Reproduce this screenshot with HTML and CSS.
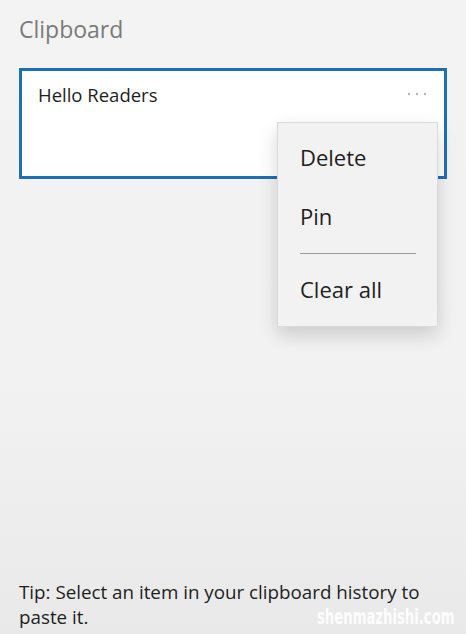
FILE: index.html
```html
<!DOCTYPE html>
<html>
<head>
<meta charset="utf-8">
<link rel="stylesheet" href="styles.css">
</head>
<body>
<div class="panel">
  <h1 class="title">Clipboard</h1>
  <div class="item">
    <span class="item-text">Hello Readers</span>
    <span class="more"><i></i><i></i><i></i></span>
  </div>
  <div class="menu">
    <div class="menu-item">Delete</div>
    <div class="menu-item">Pin</div>
    <div class="menu-sep"></div>
    <div class="menu-item">Clear all</div>
  </div>
  <p class="tip">Tip: Select an item in your clipboard history to paste it.</p>
  <span class="watermark">shenmazhishi.com</span>
</div>
</body>
</html>
```
FILE: styles.css
```css
html, body {
  margin: 0;
  padding: 0;
}
body {
  width: 466px;
  height: 634px;
  overflow: hidden;
  font-family: "Open Sans", "Noto Sans", sans-serif;
}
.panel {
  position: relative;
  box-sizing: border-box;
  height: 634px;
  padding: 0 19px 0 19px;
  display: flex;
  flex-direction: column;
  background: linear-gradient(to bottom, #f3f3f3 0%, #f2f2f2 60%, #e9e9e9 100%);
}
.title {
  margin: 14px 0 0 0;
  font-size: 23px;
  line-height: 30px;
  font-weight: 400;
  color: #7a7a7a;
}
.item {
  margin-top: 24px;
  height: 111px;
  box-sizing: border-box;
  border: 3px solid #1f6fb5;
  background: #ffffff;
  display: flex;
  align-items: flex-start;
  justify-content: space-between;
  padding: 11px 18px 0 16px;
}
.item-text {
  font-size: 18.5px;
  line-height: 26px;
  color: #1e1e1e;
}
.more {
  display: flex;
  gap: 6px;
  margin-top: 11px;
}
.more i {
  display: block;
  width: 2px;
  height: 2px;
  background: #9a9a9a;
  border-radius: 1px;
}
.menu {
  position: absolute;
  left: 277px;
  top: 122px;
  width: 161px;
  height: 205px;
  box-sizing: border-box;
  background: #f2f2f2;
  border: 1px solid #dadada;
  box-shadow: 0 8px 18px rgba(0, 0, 0, 0.16);
  padding: 20px 21px 0 22px;
}
.menu-item {
  font-size: 22px;
  line-height: 29px;
  color: #1e1e1e;
}
.menu-item:first-child {
  margin-bottom: 30px;
}
.menu-sep {
  height: 1px;
  background: #9c9c9c;
  margin: 22px 0 21px 0;
}
.tip {
  margin: auto 0 4px 0;
  font-size: 18.8px;
  line-height: 25px;
  color: #1e1e1e;
}
.watermark {
  position: absolute;
  right: 11px;
  bottom: 4px;
  font-family: "DejaVu Sans Condensed", "Liberation Sans Narrow", sans-serif;
  font-weight: 700;
  font-size: 21px;
  line-height: 26px;
  transform: scaleX(0.7);
  transform-origin: right center;
  color: rgba(255, 255, 255, 0.92);
}
```
